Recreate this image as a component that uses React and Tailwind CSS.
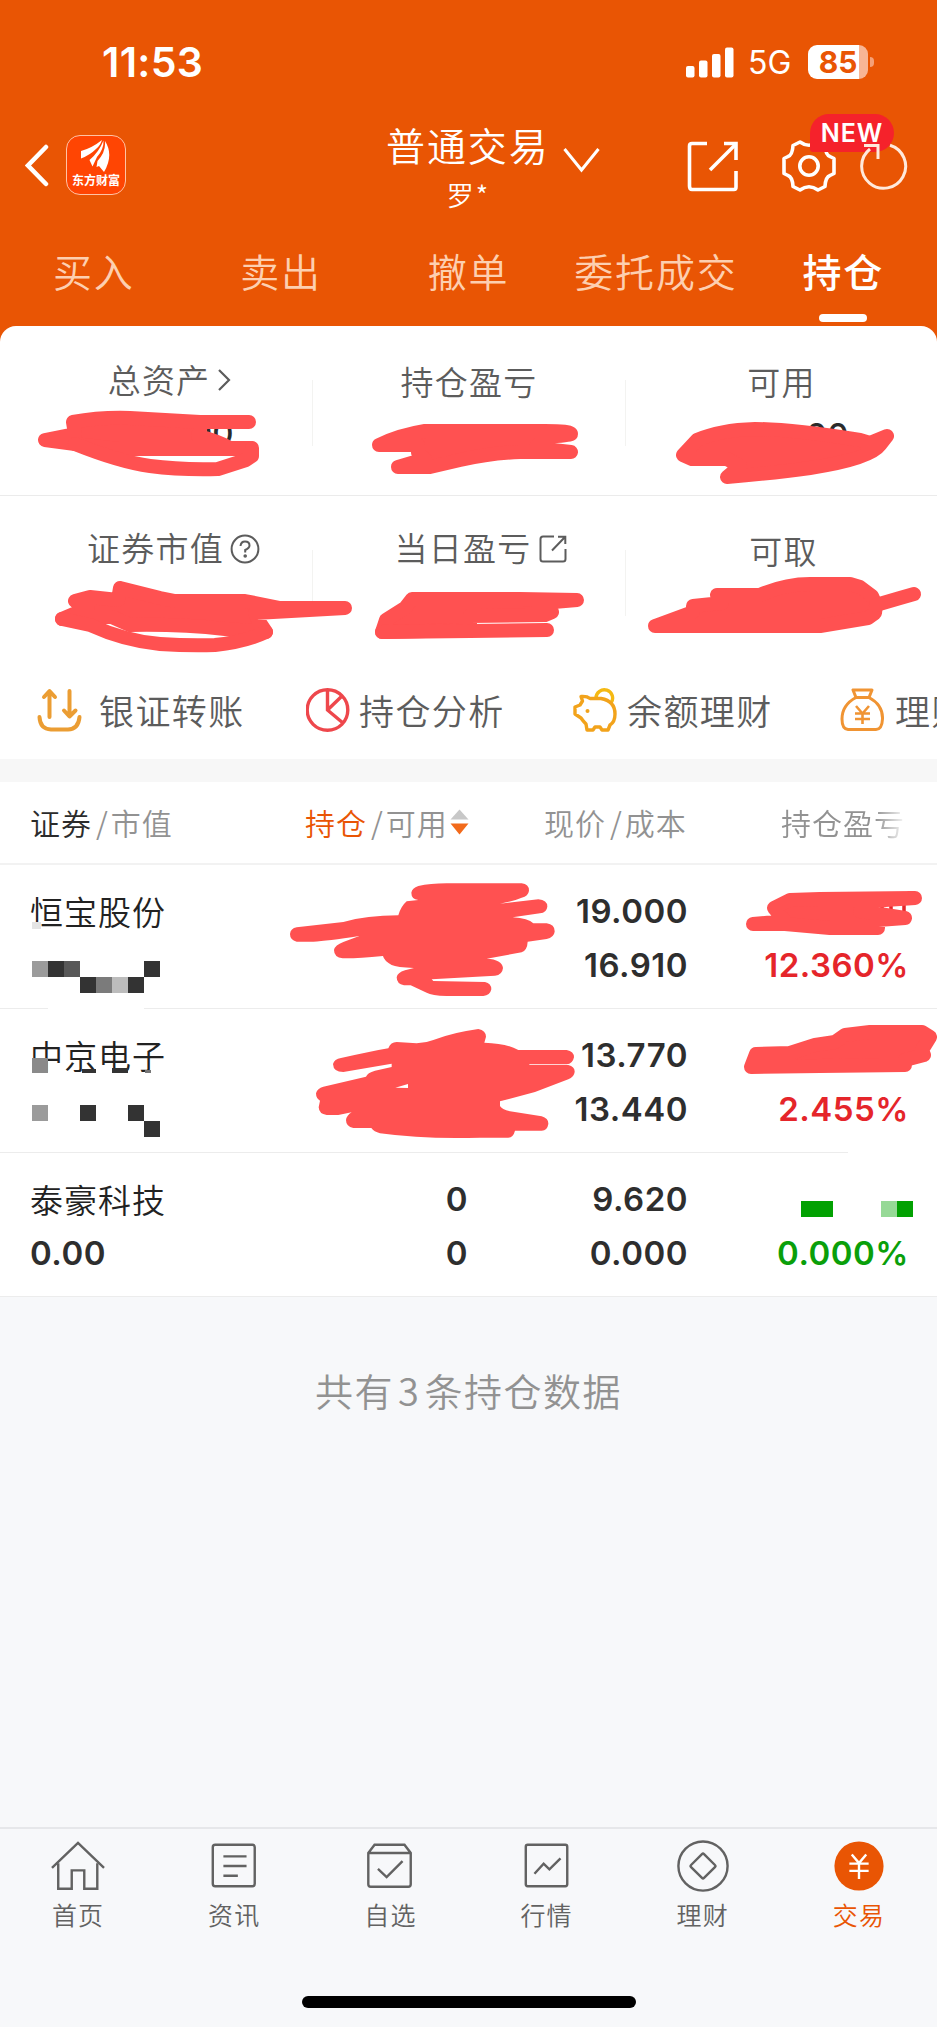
const LATIN = "font-['Inter','Noto_Sans_CJK_SC',sans-serif]";
const CJK = "font-['Noto_Sans_CJK_SC',sans-serif]";

function StatusBar() {
    return (
        <div className={`flex h-[100px] items-start justify-between pl-[102px] pr-[63px] pt-[42px] ${LATIN}`}>
            <div className="text-[41px] font-semibold leading-10 tracking-[0.3px]">11:53</div>
            <div className="flex h-10 items-center">
                <svg width="48" height="31" viewBox="0 0 48 31" fill="white">
                    <rect x="0" y="19" width="8.5" height="11.5" rx="2" />
                    <rect x="13" y="13.5" width="8.5" height="17" rx="2" />
                    <rect x="26" y="7" width="8.5" height="23.5" rx="2" />
                    <rect x="39" y="0.5" width="8.5" height="30" rx="2" />
                </svg>
                <span className="ml-[14px] w-[46px] pt-[2px] text-[32px] font-normal leading-10">5G</span>
                <div className="ml-[14px] flex h-[34px] w-[60px] items-center justify-center rounded-[9px] bg-linear-to-r from-white from-85% to-[#f8b595] to-85% text-[30px] font-bold leading-[34px] text-[#e95504]">
                    85
                </div>
                <div className="ml-[2px] h-[10px] w-1 rounded-r-full bg-[#f5a077]" />
            </div>
        </div>
    );
}

function AppLogo() {
    return (
        <div className="flex h-[60px] w-[60px] flex-col items-center rounded-[14px] border border-[#ffc3a5] bg-[#ff4503] pt-1">
            <svg width="32" height="34" viewBox="0 0 32 34" fill="white">
                <path d="M1 11 Q12 8 22 0 Q20 6 16 9 Q10 15 1 18.500 Z" />
                <path d="M23.500 0.500 Q24 9 17 17 L12.500 26.500 L9.500 20 Q19 12 23.500 0.500 Z" />
                <path d="M25 1 Q34 15 24 32 L19 26 L16.500 27 L17.500 21 Q26 12 25 1 Z" />
            </svg>
            <div className={`-mt-[1px] whitespace-nowrap text-[12px] font-bold leading-[14px] ${CJK}`}>东方财富</div>
        </div>
    );
}

function TitleBar() {
    return (
        <div className="grid h-[132px] grid-cols-[388px_1fr_249px] items-start">
            <div className="flex items-center pl-[25px] pt-[35px]">
                <svg width="26" height="44" viewBox="0 0 26 44" fill="none" stroke="white" strokeWidth="4.5" strokeLinecap="round">
                    <path d="M21 4 L3 22.500 L21 41" strokeLinejoin="miter" />
                </svg>
                <div className="ml-[15px]">
                    <AppLogo />
                </div>
            </div>
            <div className="flex">
                <div className="w-[161px] pt-[22px] text-center">
                    <div className="-ml-[2px] whitespace-nowrap text-[39px] leading-[44px] tracking-[1.9px]">普通交易</div>
                    <div className="mt-[13px] text-[27px] leading-8 tracking-[2px]">罗*</div>
                </div>
                <svg className="ml-[13px] mt-[45px]" width="40" height="28" viewBox="0 0 40 28" fill="none" stroke="white" strokeWidth="3">
                    <path d="M2.5 4 L19.5 25 L36.5 4" />
                </svg>
            </div>
            <div className="relative flex items-center pt-[38px] pl-0">
                <svg className="-ml-[2px]" width="52" height="52" viewBox="0 0 52 52" fill="none" stroke="white" strokeWidth="3.6">
                    <path d="M21 3.5 H6 Q3.5 3.5 3.5 6 V46 Q3.5 49.5 6 49.5 H48 Q50 49.5 50 47 V31" />
                    <path d="M24 30 L50 4" />
                    <path d="M38 3.5 H50 V20" />
                </svg>
                <svg className="ml-[43px]" width="56" height="56" viewBox="-28 -28 56 56" fill="none" stroke="white" strokeWidth="3.6" strokeLinejoin="round">
                    <path d="M-9 -24 Q0 -17.500 9 -24 L16 -20.500 Q16.500 -11 21 -9.500 L25 -7.500 V7.500 L21 9.500 Q16.500 11 16 20.500 L9 24 Q0 17.500 -9 24 L-16 20.500 Q-16.500 11 -21 9.500 L-25 7.500 V-7.500 L-21 -9.500 Q-16.500 -11 -16 -20.500 Z" />
                    <circle r="9.2" />
                </svg>
                <div className={`absolute left-[122px] top-[14px] flex h-[38px] w-[84px] items-center justify-center rounded-[19px] rounded-bl-[3px] bg-[#f5222b] text-[25px] font-semibold leading-[38px] tracking-[1px] ${LATIN}`}>
                    NEW
                </div>
                <svg className="relative ml-[22px]" width="50" height="50" viewBox="0 0 50 50" fill="none" stroke="#ffe9dc" strokeWidth="3">
                    <path d="M31 4.2 A22 22 0 1 1 11 8" />
                    <path d="M5 4.5 H19 V18" />
                </svg>
            </div>
        </div>
    );
}

const tabs = ["买入", "卖出", "撤单", "委托成交", "持仓"];

function Tabs() {
    return (
        <div className="grid h-[94px] grid-cols-5 text-[39px] leading-[44px] tracking-[1.8px]">
            {tabs.map((tab) => {
                const active = tab === "持仓";
                return (
                    <div key={tab} className="flex flex-col items-center pt-[16px]">
                        <div className={active ? "font-medium text-white" : "text-[#fdcfb0]"}>{tab}</div>
                        {active && <div className="mt-[22px] h-2 w-12 rounded-full bg-white" />}
                    </div>
                );
            })}
        </div>
    );
}

function Stat({ label, icon, value, pad, drop }) {
    return (
        <div className={`flex flex-col items-center ${drop}`}>
            <div className="flex h-9 items-center text-[33px] leading-9 tracking-[1.2px] text-[#5c5c5c]">
                {label}
                {icon}
            </div>
            <div className={`mt-[18px] self-start text-[33px] font-medium leading-9 text-[#2b2b2b] ${LATIN} ${pad}`}>{value}</div>
        </div>
    );
}

function Divider() {
    return <div className="mt-[54px] h-[66px] bg-[#f3f3f1]" />;
}

function Stats() {
    return (
        <>
            <div className="grid h-[170px] grid-cols-[312px_1px_312px_1px_1fr] border-b border-[#ebebeb]">
                <Stat
                    label="总资产"
                    value="00"
                    pad="pl-[163px]"
                    drop="pt-[35px] pl-[28px]"
                    icon={
                        <svg className="ml-[6px] mt-[2px]" width="16" height="24" viewBox="0 0 16 24" fill="none" stroke="#5c5c5c" strokeWidth="2.2">
                            <path d="M3 2 L13 12 L3 22" />
                        </svg>
                    }
                />
                <Divider />
                <Stat label="持仓盈亏" value="" pad="" drop="pt-[37px]" />
                <Divider />
                <Stat label="可用" value="00" pad="pl-[180px]" drop="pt-[37px]" />
            </div>
            <div className="grid h-[168px] grid-cols-[312px_1px_312px_1px_1fr]">
                <Stat
                    label="证券市值"
                    value="00"
                    pad="pl-[151px] pt-[5px]"
                    drop="pt-[33px] pl-[35px]"
                    icon={
                        <svg className="ml-[6px] mt-[4px]" width="30" height="30" viewBox="0 0 30 30" fill="none" stroke="#5c5c5c" strokeWidth="2">
                            <circle cx="15" cy="15" r="13.4" />
                            <path d="M10.5 12 Q11 7.500 15 7.500 Q19.500 7.500 19.500 11.500 Q19.500 14 15.200 16 V18.500" />
                            <circle cx="15.200" cy="22" r="0.8" fill="#5c5c5c" />
                        </svg>
                    }
                />
                <Divider />
                <Stat
                    label="当日盈亏"
                    value=""
                    pad=""
                    drop="pt-[33px] pl-[24px]"
                    icon={
                        <svg className="ml-[8px] mt-[3px]" width="28" height="28" viewBox="0 0 28 28" fill="none" stroke="#5c5c5c" strokeWidth="2">
                            <path d="M15 1.500 H4 Q1.500 1.500 1.500 4 V24 Q1.500 26.500 4 26.500 H24 Q26.500 26.500 26.500 24 V14" />
                            <path d="M13 15.500 L26 2 M19 1.800 H26.300 V9" />
                        </svg>
                    }
                />
                <Divider />
                <Stat label="可取" value="" pad="" drop="pt-[36px] pl-[4px]" />
            </div>
        </>
    );
}

function Shortcuts() {
    return (
        <div className="flex h-[95px] items-start overflow-hidden whitespace-nowrap pl-[37px] pt-[23px] text-[35px] leading-[46px] tracking-[1.4px] text-[#5c5c5c]">
            <div className="flex w-[269px] shrink-0 items-center">
                <svg width="45" height="44" viewBox="0 0 45 44" fill="none" stroke="#eb9d33" strokeWidth="4" strokeLinecap="round" strokeLinejoin="round">
                    <path d="M2.500 29 Q3 41 14 41.500 H31 Q41.500 41 42.500 29" />
                    <path d="M12.500 29 V4 M7 9 L12.500 3 L18 9" />
                    <path d="M32.500 3 V28 M27 22.500 L32.500 28.500 L38.500 22.500" />
                </svg>
                <span className="ml-[17px]">银证转账</span>
            </div>
            <div className="flex w-[267px] shrink-0 items-center">
                <svg width="44" height="44" viewBox="0 0 44 44" fill="none" stroke="#ee474c" strokeWidth="3.400">
                    <circle cx="21.500" cy="22" r="20.300" />
                    <path d="M21.500 2 V22 L37 35 M21.500 22 L36 8" />
                </svg>
                <span className="ml-[9px]">持仓分析</span>
            </div>
            <div className="flex w-[267px] shrink-0 items-center">
                <svg width="44" height="44" viewBox="0 0 44 44" fill="none" strokeWidth="3.400" strokeLinejoin="round">
                    <path d="M23 10 A8.300 8.300 0 1 1 38 15" stroke="#f5b912" />
                    <path d="M8 8.500 Q14 8 17 10.500 H28 Q42 13 42 26 Q42 34 37 37 L35 42 H29 L27 39 H22 L20 42 H14 L13 36 Q10 33 8 30 L2 26 V19 L7 17 L9.500 13 Z" stroke="#f2a31b" />
                    <circle cx="14.500" cy="23" r="2" fill="#f2a31b" />
                </svg>
                <span className="ml-[10px]">余额理财</span>
            </div>
            <div className="flex shrink-0 items-center">
                <svg width="44" height="44" viewBox="0 0 44 44" fill="none" stroke="#f09433" strokeWidth="3" strokeLinejoin="round">
                    <path d="M13 2 H32 L29 9.500 Q43 17 42.500 31 Q42 41.500 36 41.500 H8 Q2 41 2 31 Q2 17 16 9.500 Z" />
                    <path d="M16 9.500 H29" />
                    <path d="M16 18 L22.500 25.500 L29 18 M22.500 25 V36 M15 25.500 H30 M15 31 H30" strokeWidth="2.600" />
                </svg>
                <span className="ml-[11px]">理财</span>
            </div>
        </div>
    );
}

function TableHead() {
    return (
        <div className="grid h-[83px] grid-cols-[305px_239px_237px_1fr] items-center border-b-2 border-[#f2f2f2] pb-px text-[30px] leading-9 tracking-[1px] text-[#929292]">
            <div className="flex items-center pl-[30px]">
                <span className="text-[#2b2b2b]">证券</span>
                <span className="ml-[4px] mr-[2px]">/</span>市值
            </div>
            <div className="flex items-center">
                <span className="text-[#e95504]">持仓</span>
                <span className="ml-[4px] mr-[2px]">/</span>可用
                <svg className="ml-[2px]" width="19" height="26" viewBox="0 0 19 26">
                    <path d="M9.500 0.500 L18.500 10.500 H0.500 Z" fill="#c8c8c8" />
                    <path d="M0.500 14.500 H18.500 L9.500 25.500 Z" fill="#f26a1b" />
                </svg>
            </div>
            <div className="flex items-center">
                现价<span className="ml-[4px] mr-[2px]">/</span>成本
            </div>
            <div className="mask-r-from-75% mask-r-to-100% w-[126px] whitespace-nowrap">持仓盈亏</div>
        </div>
    );
}

const rows = [
    { name: "恒宝股份", value: "", qty: "", free: "", price: "19.000", cost: "16.910", rate: "12.360%", color: "text-[#e5252a]" },
    { name: "中京电子", value: "", qty: "", free: "", price: "13.770", cost: "13.440", rate: "2.455%", color: "text-[#e5252a]" },
    { name: "泰豪科技", value: "0.00", qty: "0", free: "0", price: "9.620", cost: "0.000", rate: "0.000%", color: "text-[#0a9f0a]" },
];

function Holding({ row }) {
    return (
        <div className={`grid h-36 grid-cols-[1fr_220px_220px_221px] border-b border-[#ececec] pl-[30px] pr-[28px] pt-[19px] text-[33px] font-[560] leading-[54px] tracking-[0.5px] text-[#2e2e2e] ${LATIN}`}>
            <div>
                <div className={`h-[54px] whitespace-nowrap text-[33px] font-[350] tracking-[1px] text-[#222] ${CJK}`}>{row.name}</div>
                <div className="h-[54px]">{row.value}</div>
            </div>
            <div className="text-right">
                <div className="h-[54px]">{row.qty}</div>
                <div className="h-[54px]">{row.free}</div>
            </div>
            <div className="text-right">
                <div className="h-[54px]">{row.price}</div>
                <div className="h-[54px]">{row.cost}</div>
            </div>
            <div className={`text-right ${row.color}`}>
                <div className="h-[54px]" />
                <div className="h-[54px]">{row.rate}</div>
            </div>
        </div>
    );
}

const navItems = [
    {
        label: "首页",
        icon: (
            <>
                <path d="M1 28 L28 2 L55 28" />
                <path d="M7.500 23 V49.500 H21.500 V30.500 H34.500 V49.500 H48 V23" />
            </>
        ),
    },
    {
        label: "资讯",
        icon: (
            <>
                <rect x="6" y="4" width="43.500" height="43" rx="2.500" />
                <path d="M17 16 H41 M17 26 H41 M17 36 H32" />
            </>
        ),
    },
    {
        label: "自选",
        icon: (
            <>
                <path d="M5.500 12.500 L12 4 H43 L49.500 12.500 V45 Q49.500 47.500 47 47.500 H8 Q5.500 47.500 5.500 45 Z M5.500 12.500 H49.500" />
                <path d="M15.500 29 L24.500 37.500 L41 21" />
            </>
        ),
    },
    {
        label: "行情",
        icon: (
            <>
                <rect x="6" y="4" width="43" height="43" rx="2" />
                <path d="M15 34 L24.500 23.500 L30.500 29.500 L42 18" />
            </>
        ),
    },
    {
        label: "理财",
        icon: (
            <>
                <circle cx="28" cy="26" r="25.500" />
                <rect x="18.500" y="16.500" width="19" height="19" rx="1.500" transform="rotate(45 28 26)" />
            </>
        ),
    },
    {
        label: "交易",
        active: true,
        icon: (
            <>
                <circle cx="28" cy="26" r="25.500" fill="#e95504" stroke="none" />
                <path d="M20.500 14 L28 23 L35.500 14 M28 23 V39.500 M18 23.500 H38 M18 31 H38" stroke="white" />
            </>
        ),
    },
];

function BottomNav() {
    return (
        <div className="mt-auto h-[200px] border-t-2 border-[#e6e7ea] bg-[#f7f8fa]">
            <div className="grid h-[167px] grid-cols-6 pt-[11px]">
                {navItems.map((item) => (
                    <div key={item.label} className={`flex flex-col items-center ${item.active ? "text-[#e95504]" : "text-[#626262]"}`}>
                        <svg className="overflow-visible" width="54" height="54" viewBox="0 0 56 54" fill="none" stroke="currentColor" strokeWidth="2.500">
                            {item.icon}
                        </svg>
                        <div className="mt-[4px] text-[25px] leading-8 tracking-[1.2px]">{item.label}</div>
                    </div>
                ))}
            </div>
            <div className="mx-auto h-3 w-[334px] rounded-full bg-black" />
        </div>
    );
}

// hand-drawn strokes that hide the private amounts
const marks = [
    "M73 422 Q100 417 130 418 L200 422 H249 H202 L198 436 Q218 441 230 448 L250 448 L242 449 H120 L75 444 L45 440 L75 434 Z",
    "M379 445 Q400 435 425 431 L545 431 Q571 431 571 434 Q571 435 545 437 L535 448 L571 452 L520 452 Q490 453 460 460 L430 467 L398 467 L425 459 L418 453 L418 445 Z",
    "M683 455 L697 440 Q720 430 755 429 Q790 429 860 440 L870 443 L887 436 L880 445 Q870 459 810 468 Q775 473 727 477 L740 466 L727 459 H692 Z",
    "M75 601 L90 597 L118 600 L120 588 L160 598 L175 601 H245 L280 608 L345 608 L255 613 L258 620 L266 632 L225 629 Q180 624 130 625 L112 617 L80 617 L62 619 L88 608 Z",
    "M412 599 H520 L577 600 L530 604 L552 612 L545 615 L470 616 V630 L382 632 L386 620 L405 608 Z",
    "M655 626 L693 612 L693 606 L722 603 L717 595 L760 595 Q785 584 810 584 H850 L860 587 L872 596 L876 605 L875 613 L868 618 L820 626 Z",
    "M753 924 L785 921 L774 908 L790 900 L820 899 L915 898 L870 901 L860 911 L905 918 L878 920 V928 H830 L785 924 Z",
    "M751 1067 L756 1054 L790 1053 L815 1045 L835 1042 L845 1035 L870 1032 H922 L930 1037 L922 1050 L924 1055 L905 1060 V1065 L820 1066 Z",
];

const strokes = [
    "M75 444 Q120 462 150 466 Q180 470 218 469 L246 460 L252 456 L252 448",
    "M62 619 L90 625 Q125 641 160 644 Q190 646 215 645 Q245 642 266 632",
    "M382 632 L470 631 L547 630",
    "M876 605 L900 598 L914 594",
];

// outlines over the two quantity columns, drawn at three times their size
const blots = [
    "M415 78 Q450 70 500 70 H725 Q747 72 747 92 Q745 108 725 113 Q700 124 660 131 L775 118 Q802 120 802 140 Q800 158 780 160 L698 172 Q745 175 760 190 H800 Q825 194 824 215 Q822 232 800 237 L743 245 Q742 270 725 277 L620 296 Q666 298 669 324 Q667 345 645 347 L455 358 L460 363 L615 366 Q634 370 634 388 Q630 407 610 408 H500 Q455 407 440 398 L392 376 H372 Q350 372 350 352 Q352 338 375 331 L402 324 Q350 322 335 315 Q312 302 309 288 Q230 296 188 295 Q162 292 162 270 Q165 255 190 246 L238 228 Q140 243 100 245 H50 Q30 240 30 222 Q32 205 50 202 L190 186 Q260 166 355 166 Q362 140 380 124 L415 120 Q394 118 394 98 Q396 84 415 78 Z",
    "M183 594 Q270 575 325 565 Q332 546 350 546 L410 550 Q435 550 460 540 Q520 517 595 507 Q618 512 618 530 L613 548 Q680 550 715 570 H860 Q882 574 882 592 Q878 612 860 613 H748 V615 H865 Q885 620 884 636 Q882 652 865 658 L765 696 L660 724 V738 Q665 748 690 754 L785 769 Q806 775 805 792 Q802 812 785 812 H705 Q700 832 685 833 H600 Q430 838 300 820 Q282 815 274 804 H220 Q198 800 198 780 Q200 766 215 757 L175 765 H140 Q117 762 116 742 L120 722 Q108 715 108 700 Q112 685 130 680 L258 650 Q262 638 285 632 L335 621 V611 L190 636 Q160 636 159 612 Q163 597 183 594 Z",
];

// [x, y, width, height, fill] blocks of the pixelated amounts
const pixels = [
    [32, 961, 16, 16, "#9b9b9b"],
    [48, 961, 16, 16, "#333333"],
    [64, 961, 16, 16, "#585858"],
    [144, 961, 16, 16, "#333333"],
    [80, 977, 16, 16, "#333333"],
    [96, 977, 16, 16, "#7b7b7b"],
    [112, 977, 16, 16, "#bcbcbc"],
    [128, 977, 16, 16, "#333333"],
    [32, 922, 9, 7, "#e4e4e4"],
    [32, 1058, 16, 15, "#8a8a8a"],
    [82, 1069, 14, 4, "#333333"],
    [112, 1068, 16, 5, "#333333"],
    [145, 1070, 6, 3, "#777777"],
    [32, 1105, 16, 16, "#9b9b9b"],
    [80, 1105, 16, 16, "#333333"],
    [128, 1105, 16, 16, "#333333"],
    [144, 1121, 16, 16, "#333333"],
    [48, 1006, 96, 4, "#ffffff"],
    [848, 1150, 89, 4, "#ffffff"],
    [801, 1201, 32, 16, "#02a102"],
    [881, 1201, 16, 16, "#96d996"],
    [897, 1201, 16, 16, "#02a102"],
];

function Redactions() {
    return (
        <svg className="pointer-events-none absolute left-0 top-0" width="937" height="2027" viewBox="0 0 937 2027">
            {pixels.map(([x, y, w, h, fill]) => (
                <rect key={`${x}-${y}`} x={x} y={y} width={w} height={h} fill={fill} />
            ))}
            <path d="M882 904 V914 M891 904 V914 M904 904 V914" stroke="#e5252a" strokeWidth="3.500" />
            <g fill="#ff5151" stroke="#ff5151" strokeWidth="14" strokeLinecap="round" strokeLinejoin="round">
                {marks.map((d) => (
                    <path key={d} d={d} />
                ))}
                {strokes.map((d) => (
                    <path key={d} d={d} fill="none" />
                ))}
            </g>
            <g fill="#ff5151" transform="translate(280 860) scale(0.33333)">
                {blots.map((d) => (
                    <path key={d} d={d} />
                ))}
                <path d="M346 683 L384 672 V684 Z" fill="white" />
            </g>
        </svg>
    );
}

function App() {
    return (
        <div className={`relative flex h-[2027px] w-[937px] flex-col overflow-hidden bg-[#f7f8fa] font-[350] ${CJK}`}>
            <header className="h-[326px] bg-[#e95504] text-white">
                <StatusBar />
                <TitleBar />
                <Tabs />
            </header>
            <div className="bg-[#e95504]">
                <section className="h-[433px] rounded-t-[16px] bg-white">
                    <Stats />
                    <Shortcuts />
                </section>
            </div>
            <div className="h-[23px] bg-[#f7f7f7]" />
            <section className="bg-white">
                <TableHead />
                {rows.map((row) => (
                    <Holding key={row.name} row={row} />
                ))}
            </section>
            <div className="mt-[69px] text-center text-[38px] leading-[48px] tracking-[1.5px] text-[#929292]">
                共有<span className="mx-[4px]">3</span>条持仓数据
            </div>
            <BottomNav />
            <Redactions />
        </div>
    );
}

export default App;
